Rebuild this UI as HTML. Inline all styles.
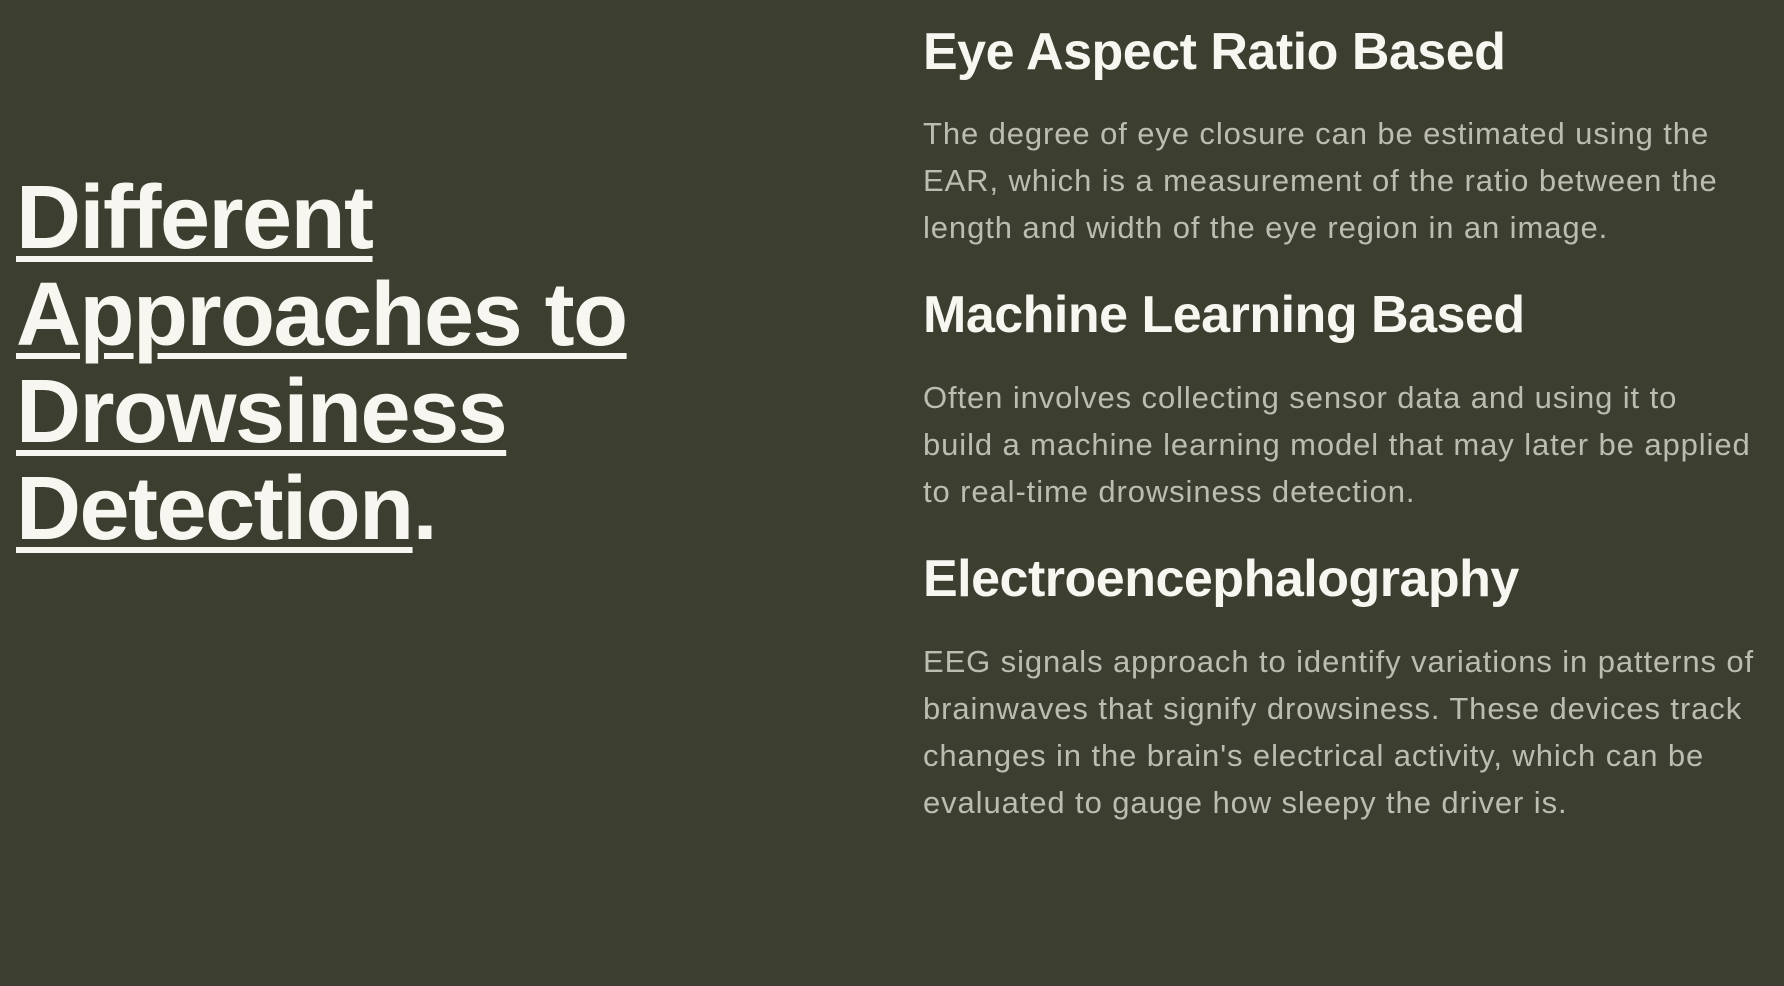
<!DOCTYPE html>
<html><head><meta charset="utf-8"><style>
html,body{margin:0;padding:0;}
body{width:1784px;height:986px;background:#3c3f30;position:relative;overflow:hidden;font-family:"Liberation Sans",sans-serif;}
.title{position:absolute;left:16px;top:170px;font-size:90px;line-height:97px;font-weight:bold;color:#f7f6f0;letter-spacing:-1.5px;white-space:nowrap;}
.title u{text-decoration-thickness:6px;text-underline-offset:8px;}
.h{position:absolute;left:923px;font-size:52px;line-height:52px;font-weight:bold;color:#f7f6f0;letter-spacing:-0.5px;white-space:nowrap;}
.p{position:absolute;left:923px;font-size:31px;line-height:47px;color:#bdbcb1;letter-spacing:0.9px;white-space:nowrap;}
</style></head><body>
<div class="title"><u>Different </u><br><u>Approaches to </u><br><u>Drowsiness </u><br><u>Detection</u>.</div>
<div class="h" style="top:26px">Eye Aspect Ratio Based</div>
<div class="p" style="top:110px">The degree of eye closure can be estimated using the<br>EAR, which is a measurement of the ratio between the<br>length and width of the eye region in an image.</div>
<div class="h" style="top:289px">Machine Learning Based</div>
<div class="p" style="top:374px">Often involves collecting sensor data and using it to<br>build a machine learning model that may later be applied<br>to real-time drowsiness detection.</div>
<div class="h" style="top:553px">Electroencephalography</div>
<div class="p" style="top:638px">EEG signals approach to identify variations in patterns of<br>brainwaves that signify drowsiness. These devices track<br>changes in the brain's electrical activity, which can be<br>evaluated to gauge how sleepy the driver is.</div>
</body></html>
